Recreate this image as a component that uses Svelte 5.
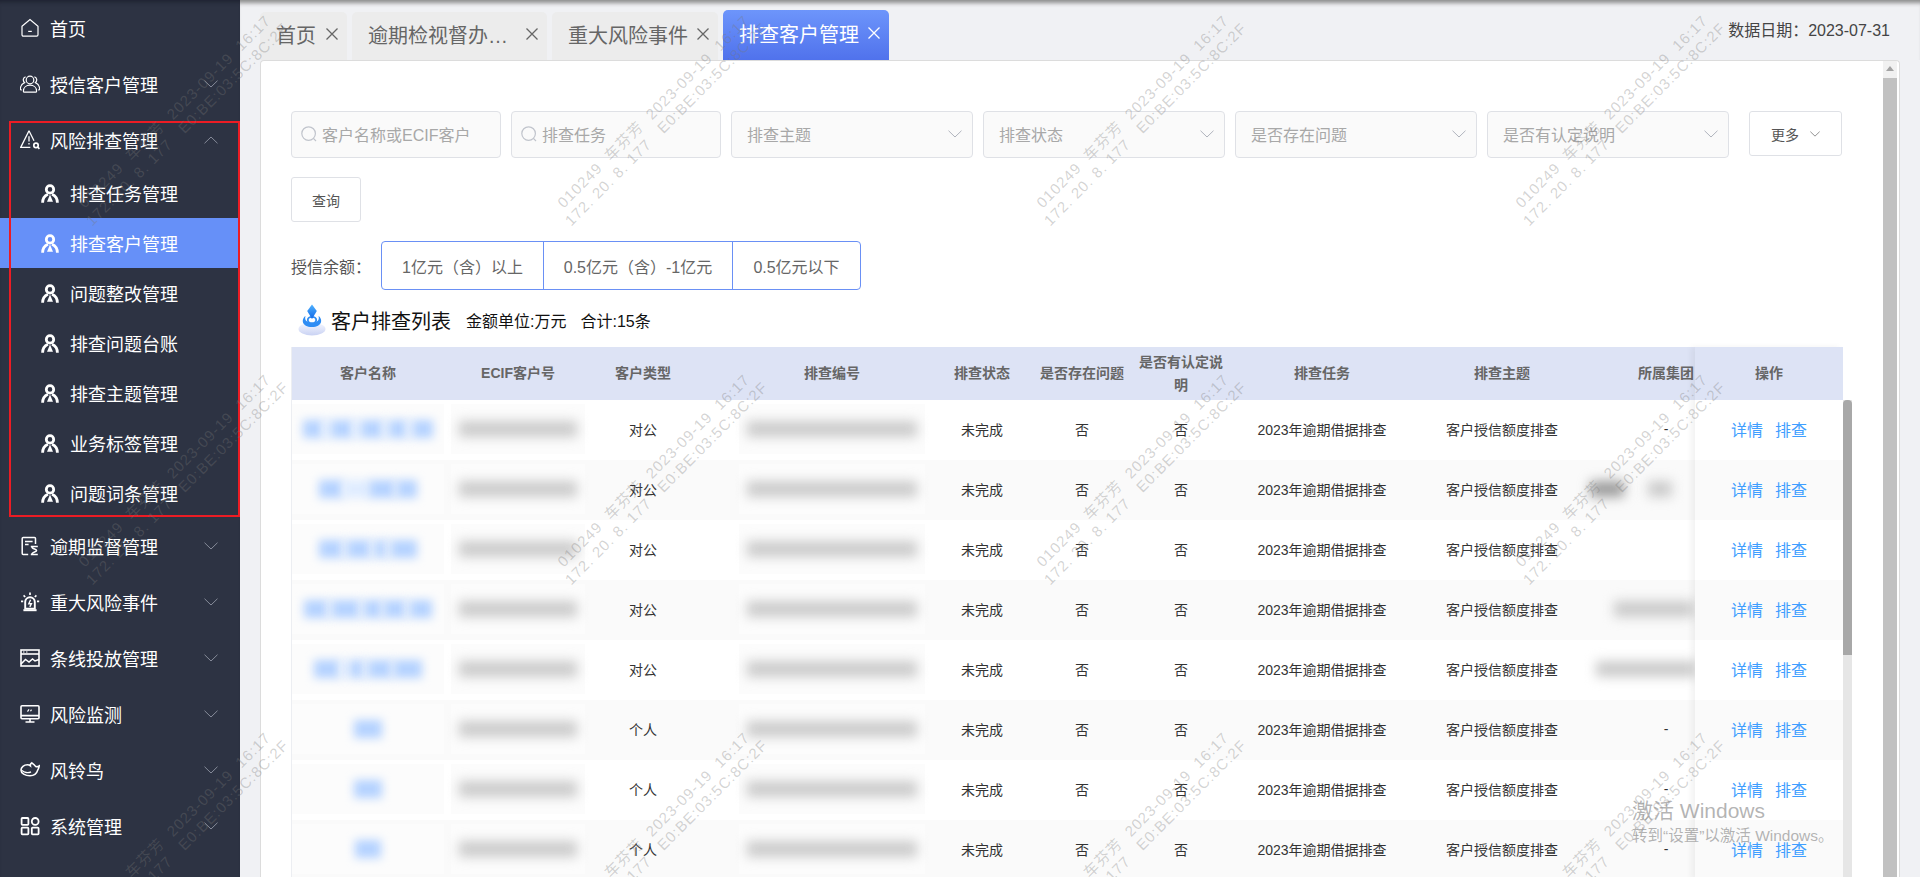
<script>
  const menuTop = [
    { icon: 'home', text: '首页' },
    { icon: 'users', text: '授信客户管理', arrow: 'down' }
  ];
  const subMenu = ['排查任务管理', '排查客户管理', '问题整改管理', '排查问题台账', '排查主题管理', '业务标签管理', '问题词条管理'];
  const menuBottom = [
    { icon: 'doc', text: '逾期监督管理' },
    { icon: 'siren', text: '重大风险事件' },
    { icon: 'chart', text: '条线投放管理' },
    { icon: 'monitor', text: '风险监测' },
    { icon: 'bird', text: '风铃鸟' },
    { icon: 'grid', text: '系统管理' }
  ];

  const tabs = [
    { text: '首页', width: 87 },
    { text: '逾期检视督办人员管理', width: 195, short: true },
    { text: '重大风险事件', width: 166 },
    { text: '排查客户管理', width: 166, active: true }
  ];

  // shift = extra left padding, so the title sits over its blurred cell
  const columns = [
    { title: '客户名称', width: 152 },
    { title: 'ECIF客户号', width: 136, shift: 12 },
    { title: '客户类型', width: 126 },
    { title: '排查编号', width: 234, shift: 18 },
    { title: '排查状态', width: 84 },
    { title: '是否存在问题', width: 112, shift: 4 },
    { title: '是否有认定说明', width: 90 },
    { title: '排查任务', width: 192 },
    { title: '排查主题', width: 168 },
    { title: '所属集团', width: 160 }
  ];

  // widths of blurred name pieces, odd places are gaps
  const rows = [
    { type: '对公', name: [20, 8, 22, 8, 22, 6, 18, 6, 20], group: '-' },
    { type: '对公', name: [24, 26, 26, 2, 20], group: 'dark' },
    { type: '对公', name: [24, 4, 24, 4, 12, 4, 26], group: '' },
    { type: '对公', name: [24, 4, 28, 4, 18, 2, 22, 4, 22], group: 'bar' },
    { type: '对公', name: [26, 10, 14, 4, 24, 2, 28], group: 'wide' },
    { type: '个人', name: [28], group: '-' },
    { type: '个人', name: [28], group: '-' },
    { type: '个人', name: [26], group: '-' }
  ];

  const marks = [];
  for (let j = 0; j < 3; j++) {
    for (let i = 0; i < 4; i++) {
      marks.push({ x: 181 + 479 * i, y: 118 + 358.5 * j });
    }
  }
</script>

{#snippet icon(name)}
  <svg class="icon" viewBox="0 0 20 20" fill="none" stroke="currentColor" stroke-width="1.2">
    {#if name === 'home'}
      <path d="M2 8.200 10 1.600l8 6.600v8.600a1.300 1.300 0 0 1-1.300 1.300H3.300A1.300 1.300 0 0 1 2 16.800z" />
      <path d="M8.200 13.400h3.600" />
    {:else if name === 'users'}
      <circle cx="10" cy="6" r="3.800" />
      <path d="M3.400 17.200c0-3.600 2.800-6 6.600-6s6.600 2.400 6.600 6c0 .6-.4.900-1 .900H4.400c-.6 0-1-.3-1-.9z" />
      <path d="M5.600 2.800C3.200 3.200 2.400 6.600 4.600 8.600 2 9.800.4 12 .4 14.800c0 .8.6 1.200 1.400 1.200" />
      <path d="M14.400 2.800c2.400.4 3.200 3.800 1 5.800 2.600 1.200 4.200 3.400 4.200 6.200 0 .8-.6 1.200-1.400 1.200" />
    {:else if name === 'warn'}
      <path d="M9 .8.700 17.400h9.600" stroke-width="1.300" />
      <path d="M9 .8l5 10" stroke-width="1.300" />
      <path d="M9 6.200v5.400M9 13v1.400" stroke-width="1.300" />
      <circle cx="16" cy="15.400" r="2.200" stroke-width="1.700" />
      <path d="M17.600 17l1.800 1.800" stroke-width="1.700" />
    {:else if name === 'doc'}
      <path d="M15.500 8V2.400c0-.6-.4-1-1-1H3.200c-.6 0-1 .4-1 1v15.200c0 .6.4 1 1 1h5" stroke-width="1.500" />
      <path d="M5 5.400h7.600M5 8.600h3.600" stroke-width="1.500" />
      <path d="M10.800 10.400h7M10.800 18.600h7M11.800 10.400c0 3 4.800 2.200 4.800 4.100s-4.800 1.200-4.800 4.100h4.800" stroke-width="1.500" />
    {:else if name === 'siren'}
      <path d="M5.200 16.600V10a4.800 4.800 0 0 1 9.600 0v6.600z" stroke-width="1.900" />
      <path d="M3.400 18.200h13.200" stroke-width="2" />
      <path d="M10.600 7.800 8.800 11.800h2.600l-1.600 3" stroke-width="1.400" />
      <path d="M10 .6v2.400M3.600 3.400l1.600 1.600M16.400 3.400 14.800 5M1 9.400h2.200M17 9.400h2.200" stroke-width="1.700" />
    {:else if name === 'chart'}
      <rect x="1" y="2" width="18" height="16" stroke-width="1.600" />
      <path d="M1 6h18" stroke-width="1.600" />
      <path d="M3 4h1.500M6 4h1.500" stroke-width="1.200" />
      <path d="M1 16l4.500-4.500 3.500 2.500 3.500-3 2.500 2 4-1.500" stroke-width="1.500" />
    {:else if name === 'monitor'}
      <rect x="1" y="1.800" width="18" height="13" rx="1" stroke-width="1.600" />
      <path d="M1 11.600h18M10 14.800v3M5.500 18h9" stroke-width="1.600" />
      <path d="M7.500 7.600l1.500-2.200M10.500 7.200l1-1.600" stroke-width="1.200" />
    {:else if name === 'bird'}
      <path d="M15.800 6.600c1 .4 2.200.2 3.400-.6-.2 2-.8 3.200-1.600 4.400-1 3.600-3.800 5.400-7.600 5.400C5.200 15.800 1 13.400 1 10c0-3 3-5.200 6.400-5.200 1.400 0 2.200.4 3 1-.2-1.200.2-2.200 1.400-3 1.400 1 3 2.400 4 3.800z" stroke-width="1.600" />
      <path d="M2 10.400c2 2.200 6 3 9 1.400" stroke-width="1.400" />
    {:else if name === 'grid'}
      <rect x="1.600" y="2" width="6.800" height="6.800" rx=".8" stroke-width="1.800" />
      <circle cx="15.200" cy="5.400" r="3.400" stroke-width="1.800" />
      <rect x="1.600" y="11.600" width="6.800" height="6.800" rx=".8" stroke-width="1.800" />
      <rect x="11.800" y="11.600" width="6.800" height="6.800" rx=".8" stroke-width="1.800" />
    {/if}
  </svg>
{/snippet}

{#snippet chevron(up)}
  <svg class="chevron" class:up viewBox="0 0 14 8" fill="none" stroke="currentColor" stroke-width="1">
    <path d="M.5.700 7 7 13.500.700" />
  </svg>
{/snippet}

{#snippet person()}
  <svg class="person" viewBox="0 0 18 19" fill="none" stroke="currentColor" stroke-width="2.800">
    <circle cx="9" cy="5.400" r="3.700" />
    <path d="M1.600 18.800C1.600 14.400 3.600 11.600 7 10.200M16.400 18.800C16.400 14.400 14.400 11.600 11 10.200" />
    <path d="M9 10.600l3 7.200H6z" fill="currentColor" stroke="none" />
  </svg>
{/snippet}

{#snippet search()}
  <svg class="search" viewBox="0 0 16 16" fill="none" stroke="currentColor" stroke-width="1.200">
    <circle cx="7.600" cy="7.600" r="6.800" />
    <path d="M12.400 12.400 15 15" />
  </svg>
{/snippet}

<div class="page">
  <aside class="sidebar">
    {#each menuTop as item}
      <div class="item">
        {@render icon(item.icon)}
        <span>{item.text}</span>
        {#if item.arrow}{@render chevron(false)}{/if}
      </div>
    {/each}
    <div class="item">
      {@render icon('warn')}
      <span>风险排查管理</span>
      {@render chevron(true)}
    </div>
    {#each subMenu as text, i}
      <div class="sub" class:current={i === 1}>
        {@render person()}
        <span>{text}</span>
      </div>
    {/each}
    {#each menuBottom as item}
      <div class="item">
        {@render icon(item.icon)}
        <span>{item.text}</span>
        {@render chevron(false)}
      </div>
    {/each}
    <div class="redbox"></div>
  </aside>

  <main class="main">
    <div class="tabbar">
      {#each tabs as tab}
        <div class="tab" class:active={tab.active} style="width: {tab.width}px">
          <span class="tab-text" class:short={tab.short}>{tab.text}</span>
          <svg class="close" viewBox="0 0 12 12" fill="none" stroke="currentColor" stroke-width="1.300">
            <path d="M.5.500l11 11M11.500.500l-11 11" />
          </svg>
        </div>
      {/each}
      <div class="data-date">数据日期：2023-07-31</div>
    </div>

    <section class="card">
      <div class="filters">
        <div class="field small">{@render search()}<span>客户名称或ECIF客户</span></div>
        <div class="field small">{@render search()}<span>排查任务</span></div>
        <div class="field select"><span>排查主题</span>{@render chevron(false)}</div>
        <div class="field select"><span>排查状态</span>{@render chevron(false)}</div>
        <div class="field select"><span>是否存在问题</span>{@render chevron(false)}</div>
        <div class="field select"><span>是否有认定说明</span>{@render chevron(false)}</div>
        <button class="more">更多{@render chevron(false)}</button>
      </div>
      <button class="query">查询</button>

      <div class="balance">
        <span class="balance-label">授信余额：</span>
        <div class="segments">
          <div style="width: 161px">1亿元（含）以上</div>
          <div style="width: 188px">0.5亿元（含）-1亿元</div>
          <div style="width: 127px">0.5亿元以下</div>
        </div>
      </div>

      <div class="title">
        <svg class="logo" viewBox="0 0 28 32">
          <defs>
            <linearGradient id="disc" x1="0" y1="0" x2="0" y2="1">
              <stop offset="0" stop-color="#f6f8ff" />
              <stop offset="1" stop-color="#c9d2f3" />
            </linearGradient>
            <linearGradient id="drop" x1="0" y1="0" x2="0" y2="1">
              <stop offset="0" stop-color="#4fb2ff" />
              <stop offset="1" stop-color="#1268e6" />
            </linearGradient>
          </defs>
          <ellipse cx="14" cy="25" rx="13.500" ry="6.500" fill="url(#disc)" />
          <path d="M7.500 12C3 15 3.500 23 14 23s11-8 6.500-11c1 3 0 6.500-6.500 6.500S6.500 15 7.500 12z" fill="#2f8df4" />
          <ellipse cx="14" cy="16" rx="4.200" ry="3.200" fill="#fff" stroke="#2f8df4" stroke-width="1.800" />
          <path d="M14 .5l4.800 6.500L14 15 9.200 7z" fill="url(#drop)" />
        </svg>
        <h2>客户排查列表</h2>
        <span class="note">金额单位:万元</span>
        <span class="note">合计:15条</span>
      </div>

      <div class="table">
        <div class="scroll-part">
          <div class="row head">
            {#each columns as col}
              <div class="cell" style="width: {col.width}px; padding-left: {col.shift || 0}px">{col.title}</div>
            {/each}
          </div>
          {#each rows as row, r}
            <div class="row body" class:even={r % 2 === 1}>
              <div class="cell" style="width: {columns[0].width}px">
                <div class="smear name-smear">
                  {#each row.name as w, i}
                    <i class="blob" class:gap={i % 2 === 1} style="width: {w}px"></i>
                  {/each}
                </div>
              </div>
              <div class="cell" style="width: {columns[1].width}px; padding-left: 12px">
                <div class="smear"><i class="bar" style="width: 118px"></i></div>
              </div>
              <div class="cell" style="width: {columns[2].width}px">{row.type}</div>
              <div class="cell" style="width: {columns[3].width}px; padding-left: 18px">
                <div class="smear"><i class="bar" style="width: 170px"></i></div>
              </div>
              <div class="cell" style="width: {columns[4].width}px">未完成</div>
              <div class="cell" style="width: {columns[5].width}px; padding-left: 4px">否</div>
              <div class="cell" style="width: {columns[6].width}px">否</div>
              <div class="cell" style="width: {columns[7].width}px">2023年逾期借据排查</div>
              <div class="cell" style="width: {columns[8].width}px">客户授信额度排查</div>
              <div class="cell group" style="width: {columns[9].width}px">
                {#if row.group === '-'}
                  -
                {:else if row.group === 'dark'}
                  <div class="group-smear"><i class="bar dark" style="width: 34px; margin-left: 4px"></i><i class="bar" style="width: 24px; margin-left: 24px"></i></div>
                {:else if row.group === 'bar'}
                  <div class="group-smear"><i class="bar" style="width: 80px; margin-left: 28px"></i></div>
                {:else if row.group === 'wide'}
                  <div class="group-smear"><i class="bar" style="width: 100px; margin-left: 10px"></i></div>
                {/if}
              </div>
            </div>
          {/each}
        </div>

        <div class="fixed-part">
          <div class="row head"><div class="cell">操作</div></div>
          {#each rows as row, r}
            <div class="row body" class:even={r % 2 === 1}>
              <div class="cell links"><span>详情</span><span>排查</span></div>
            </div>
          {/each}
        </div>

        <div class="table-scroll">
          <div class="table-gutter"></div>
          <div class="table-thumb"></div>
        </div>
      </div>

      <div class="card-scroll">
        <div class="scroll-up"></div>
        <div class="card-thumb"></div>
      </div>
    </section>
  </main>

  <div class="marks">
    {#each marks as m}
      <div class="mark" style="left: {m.x}px; top: {m.y}px">
        <div>010249&nbsp; 车芬芳&nbsp; 2023-09-19&nbsp; 16:17</div>
        <div>172. 20. 8. 177&nbsp; &nbsp;E0:BE:03:5C:8C:2F</div>
      </div>
    {/each}
  </div>

  <div class="activate">
    <div class="activate-big">激活 Windows</div>
    <div>转到“设置”以激活 Windows。</div>
  </div>
</div>

<style>
  :global(body) {
    margin: 0;
    overflow: hidden;
  }

  .page {
    position: relative;
    display: flex;
    width: 1920px;
    height: 877px;
    overflow: hidden;
    font-family: "Liberation Sans", "Noto Sans CJK SC", sans-serif;
    color: #333;
    background: #f0f1f4;
  }

  /* sidebar */
  .sidebar {
    position: relative;
    flex: none;
    width: 240px;
    background: #2d3343;
    color: #fff;
    font-size: 18px;
    box-shadow: inset 0 5px 4px -3px #1e2230;
  }
  .item {
    display: flex;
    align-items: center;
    height: 56px;
    padding: 0 22px 0 20px;
  }
  .item span {
    flex: 1;
    margin-left: 10px;
    white-space: nowrap;
  }
  .icon {
    flex: none;
    width: 20px;
    height: 20px;
  }
  .chevron {
    flex: none;
    width: 14px;
    height: 8px;
    color: #868b99;
  }
  .chevron.up {
    transform: rotate(180deg);
  }
  .sub {
    display: flex;
    align-items: center;
    height: 50px;
    padding-left: 41px;
  }
  .sub span {
    margin-left: 11px;
  }
  .sub.current {
    width: 197px;
    padding-left: 41px;
    background: #6690f8;
  }
  .person {
    flex: none;
    width: 18px;
    height: 19px;
  }
  .redbox {
    position: absolute;
    left: 9px;
    top: 121px;
    width: 227px;
    height: 392px;
    border: 2px solid #ec1c24;
  }

  /* tabs */
  .main {
    flex: 1;
    min-width: 0;
    display: flex;
    flex-direction: column;
  }
  .tabbar {
    position: relative;
    flex: none;
    display: flex;
    align-items: flex-end;
    gap: 5px;
    height: 60px;
    padding-left: 20px;
    box-shadow: inset 0 6px 4px -3px #8c8c8c;
  }
  .tab {
    box-sizing: border-box;
    display: flex;
    align-items: center;
    justify-content: space-between;
    height: 48px;
    padding: 0 9px 4px 16px;
    border-radius: 5px 5px 0 0;
    background: #ececec;
    color: #666;
    font-size: 20px;
  }
  .tab.active {
    height: 50px;
    padding-bottom: 4px;
    background: linear-gradient(#6d95fb, #5072ec);
    color: #fff;
  }
  .tab-text {
    white-space: nowrap;
  }
  .tab-text.short {
    width: 140px;
    overflow: hidden;
    text-overflow: ellipsis;
  }
  .close {
    flex: none;
    width: 12px;
    height: 12px;
  }
  .data-date {
    margin-left: auto;
    align-self: flex-start;
    margin-top: 22px;
    margin-right: 30px;
    font-size: 16px;
    line-height: 18px;
    color: #444;
    white-space: nowrap;
  }

  /* card */
  .card {
    position: relative;
    flex: 1;
    min-height: 0;
    box-sizing: border-box;
    margin: 0 20px 0 20px;
    padding: 50px 0 0 30px;
    border: 1px solid #dcdcdc;
    border-bottom: 0;
    border-radius: 4px 4px 0 0;
    background: #fff;
    overflow: hidden;
  }
  .filters {
    display: flex;
    align-items: flex-start;
    gap: 10px;
  }
  .field {
    box-sizing: border-box;
    display: flex;
    align-items: center;
    height: 47px;
    padding-bottom: 2px;
    border: 1px solid #dfe1e6;
    border-radius: 4px;
    background: #fafafa;
    color: #a8a8a8;
    font-size: 16px;
    white-space: nowrap;
  }
  .field.small {
    width: 210px;
    padding-left: 9px;
  }
  .field.select {
    width: 242px;
    padding: 0 10px 2px 15px;
    justify-content: space-between;
  }
  .search {
    flex: none;
    width: 16px;
    height: 16px;
    margin-right: 5px;
    color: #c0c4cc;
  }
  .field .chevron {
    color: #b0b4bd;
  }
  button {
    font-family: inherit;
    box-sizing: border-box;
    border: 1px solid #dfe1e6;
    border-radius: 3px;
    background: #fff;
    color: #555;
    font-size: 14px;
    cursor: pointer;
  }
  .more {
    display: flex;
    align-items: center;
    justify-content: center;
    gap: 11px;
    width: 93px;
    height: 45px;
    margin-left: 10px;
    padding: 0;
  }
  .more .chevron {
    width: 10px;
    height: 6px;
    color: #666;
  }
  .query {
    display: block;
    width: 70px;
    height: 45px;
    margin-top: 19px;
  }

  .balance {
    display: flex;
    align-items: center;
    margin-top: 19px;
  }
  .balance-label {
    width: 90px;
    font-size: 16px;
    color: #555;
    white-space: nowrap;
  }
  .segments {
    display: flex;
    height: 49px;
    box-sizing: border-box;
    border: 1px solid #6a90f5;
    border-radius: 4px;
    font-size: 16px;
    color: #666;
  }
  .segments div {
    display: flex;
    align-items: center;
    justify-content: center;
    white-space: nowrap;
  }
  .segments div + div {
    border-left: 1px solid #6a90f5;
  }

  .title {
    display: flex;
    align-items: center;
    height: 40px;
    margin-top: 10px;
    padding-left: 7px;
    color: #111;
  }
  .logo {
    flex: none;
    width: 28px;
    height: 32px;
  }
  .title h2 {
    margin: 0 15px 0 5px;
    font-size: 20px;
    font-weight: 400;
  }
  .note {
    margin-right: 14px;
    font-size: 16px;
  }

  /* table */
  .table {
    display: flex;
    width: 1561px;
    margin-top: 7px;
    font-size: 14px;
    border-left: 1px solid #eceef2;
  }
  .scroll-part {
    flex: none;
    width: 1403px;
    overflow: hidden;
  }
  .row {
    display: flex;
    height: 60px;
    background: #fff;
  }
  .row.even {
    background: #fafafa;
  }
  .row.head {
    height: 53px;
    background: #dde3f5;
    color: #666;
    font-weight: 700;
    line-height: 23px;
  }
  .cell {
    flex: none;
    box-sizing: border-box;
    display: flex;
    align-items: center;
    justify-content: center;
    text-align: center;
  }
  .row.body .cell {
    padding-bottom: 2px;
  }
  .smear {
    display: flex;
    align-items: center;
    justify-content: center;
    height: 50px;
    padding: 0 8px;
    background: #fcfcfc;
  }
  .name-smear {
    width: 136px;
  }
  .blob {
    display: block;
    height: 18px;
    background: #b4d2ff;
    filter: blur(5px);
  }
  .blob.gap {
    background: #dfecff;
  }
  .bar {
    display: block;
    height: 16px;
    background: #cbcbcb;
    filter: blur(6px);
  }
  .bar.dark {
    background: #9c9c9c;
  }
  .group-smear {
    display: flex;
    align-items: center;
    width: 100%;
    height: 50px;
  }

  .fixed-part {
    position: relative;
    flex: none;
    width: 148px;
    background: #fff;
    box-shadow: -4px 0 6px rgba(0, 0, 0, 0.05);
  }
  .fixed-part .cell {
    width: 148px;
    height: 100%;
  }
  .links {
    gap: 12px;
    font-size: 16px;
    color: #409eff;
  }
  .table-scroll {
    flex: none;
    width: 9px;
    background: #e6e6e6;
    position: relative;
  }
  .table-gutter {
    height: 53px;
    background: #fff;
  }
  .table-thumb {
    height: 255px;
    border-radius: 4px 4px 0 0;
    background: #a8a8a8;
  }

  .card-scroll {
    position: absolute;
    right: 2px;
    top: 0;
    bottom: 0;
    width: 14px;
    background: #f1f1f1;
  }
  .scroll-up {
    height: 17px;
    position: relative;
  }
  .scroll-up::before {
    content: "";
    position: absolute;
    left: 3px;
    top: 5px;
    border: 4px solid transparent;
    border-top: 0;
    border-bottom: 5px solid #a3a3a3;
  }
  .card-thumb {
    height: 100%;
    background: #c1c1c1;
  }

  /* overlays */
  .marks {
    position: absolute;
    inset: 0;
    pointer-events: none;
  }
  .mark {
    position: absolute;
    transform: translate(-50%, -50%) rotate(-45deg);
    font-size: 15px;
    line-height: 18px;
    letter-spacing: 1px;
    color: rgba(120, 120, 120, 0.32);
    text-align: center;
    white-space: nowrap;
  }
  .activate {
    position: absolute;
    left: 1632px;
    top: 796px;
    font-size: 15.5px;
    line-height: 20px;
    color: rgba(130, 130, 130, 0.6);
    white-space: nowrap;
    pointer-events: none;
  }
  .activate-big {
    font-size: 21px;
    line-height: 30px;
  }
</style>
